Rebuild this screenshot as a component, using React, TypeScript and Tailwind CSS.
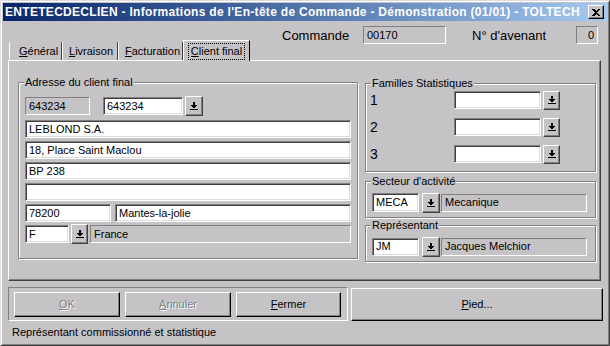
import React from 'react';

function DropArrow() {
  return (
    <svg width="8" height="8" viewBox="0 0 8 8" shapeRendering="crispEdges" className="block">
      <rect x="3" y="0" width="2" height="3" fill="#000" />
      <rect x="1" y="3" width="6" height="1" fill="#000" />
      <rect x="2" y="4" width="4" height="1" fill="#000" />
      <rect x="3" y="5" width="2" height="1" fill="#000" />
      <rect x="0" y="7" width="8" height="1" fill="#000" />
    </svg>
  );
}

function DropBtn({ className }: { className: string }) {
  return (
    <div
      className={`${className} shrink-0 flex items-center justify-center bg-[#c6c3c6] border border-t-white border-l-white border-r-[#404040] border-b-[#404040] shadow-[inset_-1px_-1px_0_#808080]`}
    >
      <DropArrow />
    </div>
  );
}

function Field({ value, className }: { value?: string; className: string }) {
  return (
    <div
      className={`${className} shrink-0 flex items-center bg-white pl-[3px] text-[11px] leading-none border border-t-[#808080] border-l-[#808080] border-b-white border-r-white shadow-[inset_1px_1px_0_#404040,inset_-1px_-1px_0_#dcdcdc]`}
    >
      {value}
    </div>
  );
}

function Static({ value, className }: { value?: string; className: string }) {
  return (
    <div
      className={`${className} shrink-0 flex items-center bg-[#c6c3c6] pl-[3px] text-[11px] leading-none border border-t-[#808080] border-l-[#808080] border-b-white border-r-white`}
    >
      {value}
    </div>
  );
}

function Group({ title, className, children }: { title: string; className: string; children?: React.ReactNode }) {
  return (
    <div className={`relative border border-[#808080] shadow-[inset_1px_1px_0_#fff,1px_1px_0_#fff] ${className}`}>
      <span className="absolute -top-[7px] left-[5px] px-[1px] bg-[#c6c3c6] text-[11px] leading-[13px]">{title}</span>
      {children}
    </div>
  );
}

function Btn({ children, className, disabled }: { children: React.ReactNode; className: string; disabled?: boolean }) {
  return (
    <div
      className={`${className} shrink-0 flex items-center justify-center text-[11px] border border-t-white border-l-white border-r-black border-b-black shadow-[inset_-1px_-1px_0_#808080] ${
        disabled ? 'text-[#808080] [text-shadow:1px_1px_0_#fff]' : 'text-black'
      }`}
    >
      {children}
    </div>
  );
}

export default function App() {
  return (
    <div className="w-[610px] h-[346px] overflow-hidden flex flex-col bg-[#c6c3c6] p-[2px] border border-t-[#dcdcdc] border-l-[#dcdcdc] border-r-[#404040] border-b-[#404040] shadow-[inset_1px_1px_0_#fff,inset_-1px_-1px_0_#808080] font-['Liberation_Sans',Arial,sans-serif] text-black">
      {/* title bar */}
      <div className="h-[18px] shrink-0 flex items-center justify-between pl-[2px] pr-[3px] bg-linear-to-r from-[#0a246a] to-[#a6caf0]">
        <span className="text-white font-bold text-[12px] tracking-[0.3px] leading-none whitespace-nowrap">
          ENTETECDECLIEN - Informations de l'En-tête de Commande - Démonstration (01/01) - TOLTECH
        </span>
        <div className="w-[16px] h-[14px] flex items-center justify-center bg-[#c6c3c6] border border-t-white border-l-white border-r-black border-b-black shadow-[inset_-1px_-1px_0_#808080]">
          <svg width="8" height="7" viewBox="0 0 8 7" shapeRendering="crispEdges">
            <path d="M0 0h2l2 2 2-2h2v1L5 3.5 8 6v1H6L4 5 2 7H0V6l3-2.5L0 1z" fill="#000" />
          </svg>
        </div>
      </div>

      {/* commande row */}
      <div className="mt-[5px] h-[18px] shrink-0 flex items-center pl-[279px]">
        <span className="w-[81px] text-[13px] leading-none">Commande</span>
        <Static value="00170" className="w-[83px] h-[18px]" />
        <span className="ml-[26px] w-[104px] text-[13px] leading-none">N° d'avenant</span>
        <Static className="w-[22px] h-[18px] justify-end pr-[3px]" value="0" />
      </div>

      {/* tabs */}
      <div className="-mt-[4px] h-[20px] shrink-0 flex items-end pl-[6px] text-[11px] leading-none">
        <div className="w-[53px] h-[18px] flex items-center pl-[9px] border-l border-l-white border-r border-r-[#404040]">
          <span><span className="underline">G</span>énéral</span>
        </div>
        <div className="w-[56px] h-[18px] flex items-center pl-[6px] border-l border-l-white border-r border-r-[#404040]">
          <span><span className="underline">L</span>ivraison</span>
        </div>
        <div className="w-[65px] h-[18px] flex items-center pl-[6px] border-l border-l-white border-r border-r-[#404040]">
          <span><span className="underline">F</span>acturation</span>
        </div>
        <div className="relative z-10 -mb-[1px] w-[67px] h-[21px] flex items-center justify-center bg-[#c6c3c6] border-t border-l border-t-white border-l-white border-r border-r-black">
          <span className="px-[2px] py-[2px] border border-dotted border-black">
            <span className="underline">C</span>lient final
          </span>
        </div>
      </div>

      {/* tab panel */}
      <div className="ml-[5px] mr-[6px] h-[221px] shrink-0 flex pl-[9px] pt-[21px] border border-t-white border-l-white border-r-[#404040] border-b-[#404040] shadow-[inset_-1px_-1px_0_#808080]">
        <Group title="Adresse du client final" className="w-[340px] h-[177px] shrink-0 pl-[6px] pt-[14px]">
          <div className="flex items-center h-[18px]">
            <Static value="643234" className="w-[65px] h-[18px]" />
            <Field value="643234" className="ml-[13px] w-[80px] h-[18px]" />
            <DropBtn className="ml-[2px] w-[18px] h-[20px]" />
          </div>
          <div className="mt-[5px] flex flex-col gap-[3px]">
            <Field value="LEBLOND S.A." className="w-[326px] h-[18px]" />
            <Field value="18, Place Saint Maclou" className="w-[326px] h-[18px]" />
            <Field value="BP 238" className="w-[326px] h-[18px]" />
            <Field className="w-[326px] h-[18px]" />
            <div className="flex">
              <Field value="78200" className="w-[86px] h-[18px]" />
              <Field value="Mantes-la-jolie" className="ml-[4px] w-[236px] h-[18px]" />
            </div>
            <div className="flex items-center h-[18px]">
              <Field value="F" className="w-[44px] h-[18px]" />
              <DropBtn className="ml-[2px] w-[17px] h-[20px]" />
              <Static value="France" className="ml-[2px] w-[261px] h-[18px]" />
            </div>
          </div>
        </Group>

        <div className="ml-[7px] w-[231px] flex flex-col">
          <Group title="Familles Statistiques" className="mt-[1px] h-[89px] pl-[4px] pt-[7px]">
            <div className="flex flex-col gap-[9px]">
              {['1', '2', '3'].map((n) => (
                <div key={n} className="flex items-center h-[18px]">
                  <span className="w-[84px] text-[14px] leading-none">{n}</span>
                  <Field className="w-[87px] h-[18px]" />
                  <DropBtn className="ml-[2px] w-[17px] h-[19px]" />
                </div>
              ))}
            </div>
          </Group>
          <Group title="Secteur d'activité" className="mt-[9px] h-[37px] pl-[6px] pt-[11px]">
            <div className="flex items-center h-[19px]">
              <Field value="MECA" className="w-[47px] h-[19px]" />
              <DropBtn className="ml-[3px] w-[18px] h-[20px]" />
              <Static value="Mecanique" className="ml-[1px] w-[146px] h-[18px]" />
            </div>
          </Group>
          <Group title="Représentant" className="mt-[7px] h-[37px] pl-[6px] pt-[11px]">
            <div className="flex items-center h-[19px]">
              <Field value="JM" className="w-[47px] h-[18px]" />
              <DropBtn className="ml-[3px] w-[18px] h-[20px]" />
              <Static value="Jacques Melchior" className="ml-[1px] w-[146px] h-[18px]" />
            </div>
          </Group>
        </div>
      </div>

      {/* buttons */}
      <div className="mt-[6px] h-[34px] shrink-0 flex">
        <div className="ml-[5px] w-[340px] h-[34px] flex pl-[5px] pt-[4px] gap-[5px] border border-t-[#808080] border-l-[#808080] border-b-white border-r-white">
          <Btn disabled className="w-[106px] h-[25px]">
            <span><span className="underline">O</span>K</span>
          </Btn>
          <Btn disabled className="w-[106px] h-[25px]">
            <span><span className="underline">A</span>nnuler</span>
          </Btn>
          <Btn className="w-[105px] h-[25px]">
            <span><span className="underline">F</span>ermer</span>
          </Btn>
        </div>
        <Btn className="ml-[3px] mt-[1px] w-[252px] h-[33px]">
          <span><span className="underline">P</span>ied...</span>
        </Btn>
      </div>

      {/* status bar */}
      <div className="flex-1 flex items-center pl-[9px] text-[11px] leading-none">
        Représentant commissionné et statistique
      </div>
    </div>
  );
}
